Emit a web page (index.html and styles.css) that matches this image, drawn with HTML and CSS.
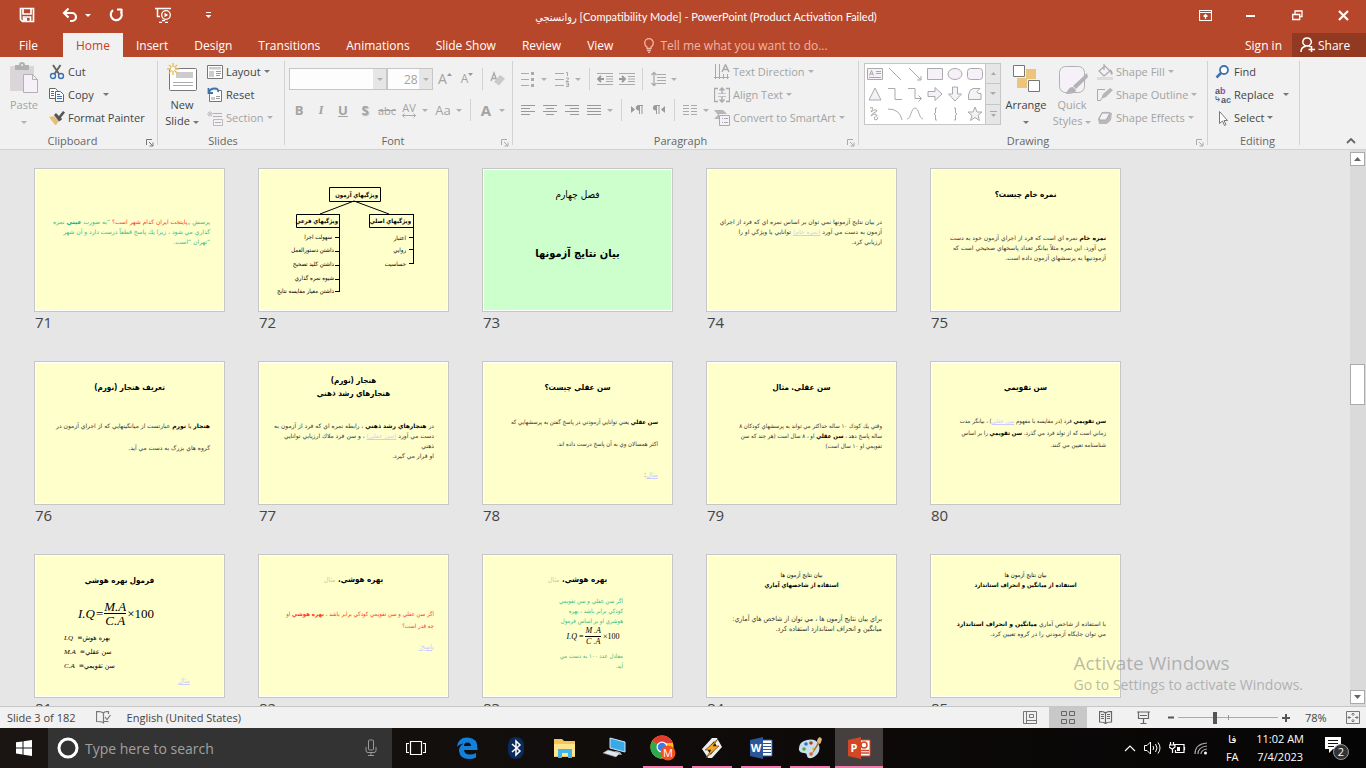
FILE: index.html
```html
<!DOCTYPE html>
<html lang="en">
  <head>
    <meta charset="UTF-8" />
    <meta name="viewport" content="width=device-width, initial-scale=1.0" />
    <title>روانسنجي - PowerPoint</title>
    <link rel="stylesheet" href="styles.css">
  </head>
  <body>
    <header class="titlebar">
      <div class="quick">
        <button aria-label="Save"><svg width="16" height="16"><path d="M1.5 1.5h13v13h-11l-2-2z M4 2v5h8V2 M4.500 14v-4h7v4" fill="none" stroke="#fff" stroke-width="1.700"/><path d="M5 11h3v3H5z" fill="#fff"/></svg></button>
        <button class="undo" aria-label="Undo"><svg width="16" height="16"><path d="M2 6h8a4 4 0 0 1 0 8H8 M6.500 1.500 2 6l4.500 4.500" fill="none" stroke="#fff" stroke-width="2.200"/></svg><span class="caret"></span></button>
        <button class="redo" aria-label="Redo"><svg width="16" height="16"><path d="M9 2.500H14M13.500 2v5 M12.800 4.500A5.500 5.500 0 1 1 5 3.200" fill="none" stroke="#fff" stroke-width="2.200"/></svg></button>
        <button class="present" aria-label="Start from beginning"><svg width="18" height="16"><path d="M1 1.500h16 M3.500 2v7.500H6 M8 13.500h3M5 15.500h3M11 15.500h3" fill="none" stroke="#fff" stroke-width="1.500"/><circle cx="12" cy="8" r="4.300" fill="none" stroke="#fff" stroke-width="1.300"/><path d="M10.500 5.800 14.200 8l-3.700 2.200z" fill="#fff"/></svg></button>
        <button class="more" aria-label="Customize"><svg width="7" height="8"><path d="M1 1.500h5" stroke="#fff"/><path d="M0.500 4h6l-3 3z" fill="#fff"/></svg></button>
      </div>
      <div class="doc-title">روانسنجي [Compatibility Mode] - PowerPoint (Product Activation Failed)</div>
      <div class="window-buttons">
        <button aria-label="Ribbon options"><svg width="13" height="11"><path d="M.5.5h12v10H.5z M1 2.500h11 M6.500 9V5 M4.500 6.500l2-2 2 2" fill="none" stroke="#fff" stroke-width="1.200"/></svg></button>
        <button aria-label="Minimize"><svg width="10" height="10"><path d="M0 6h9" stroke="#fff" stroke-width="2"/></svg></button>
        <button aria-label="Restore"><svg width="11" height="11"><path d="M.7 4.500h7v5h-7z M3 4V1h7v5.500H8" fill="none" stroke="#fff" stroke-width="1.300"/></svg></button>
        <button aria-label="Close"><svg width="11" height="11"><path d="M1 1l9 9M10 1l-9 9" stroke="#fff" stroke-width="2.200"/></svg></button>
      </div>
    </header>

    <nav class="tabs">
      <button class="file">File</button>
      <button class="active">Home</button>
      <button>Insert</button>
      <button>Design</button>
      <button>Transitions</button>
      <button>Animations</button>
      <button>Slide Show</button>
      <button>Review</button>
      <button>View</button>
      <label class="tell">
        <svg width="10" height="15"><path d="M3 10.500V9Q.7 7.500.7 5a4.300 4.300 0 0 1 8.600 0Q9.300 7.500 7 9v1.500z M3 12.500h4M4 14.300h2" fill="none" stroke="#f3b6a4" stroke-width="1.300"/></svg>
        <input type="text" placeholder="Tell me what you want to do..." />
      </label>
      <button class="sign">Sign in</button>
      <button class="share"><svg width="16" height="16"><path d="M1 15q0-5 4.500-5.500 M7 1a4 4 0 0 1 2.200 7.500q-2.200 1-4.300 0A4 4 0 0 1 7 1z M9 9l1.500 1 M11.500 9v6M8.500 12.500h6.500" fill="none" stroke="#fff" stroke-width="1.500"/></svg>Share</button>
    </nav>

    <section class="ribbon">
      <div class="group clipboard">
        <div class="tools">
          <button class="big off">
            <svg width="30" height="32"><path d="M1 4h24v25H1z" fill="#d9d5d9"/><path d="M6 3h4q0-3 3-3t3 3h4v5H6z" fill="#b1b1b1"/><circle cx="13" cy="3" r="1" fill="#f1f1f1"/><path d="M14.500 12.500h9l5 5v13h-14z" fill="#f6f1f8" stroke="#b1b1b1"/><path d="M23.500 12.500v5h5" fill="none" stroke="#b1b1b1"/></svg>
            Paste<span><i class="caret"></i></span>
          </button>
          <div class="list">
            <button class="cmd"><svg width="16" height="16"><path d="M4 1l6 9M11.500 1l-6 9" stroke="#666" stroke-width="2"/><circle cx="4" cy="12" r="2.500" fill="none" stroke="#3f72ab" stroke-width="1.400"/><circle cx="12" cy="12" r="2.500" fill="none" stroke="#3f72ab" stroke-width="1.400"/></svg>Cut</button>
            <button class="cmd split"><svg width="16" height="16"><path d="M.5 1.500h6l2 2v8h-8z" fill="#fff" stroke="#666"/><path d="M6.500 4.500h5l3 3v7h-8z" fill="#fff" stroke="#666"/><path d="M2 4.500h3M2 6.500h3M2 8.500h3M8 7.500h3M8 9.500h5M8 11.500h5" stroke="#3f72ab"/></svg>Copy<i class="caret"></i></button>
            <button class="cmd"><svg width="16" height="16"><path d="M0 7l5-1 5 5-3 4H6z" fill="#eabf75"/><path d="M5 5l2-2 3 3 4-5 2 1.500-4 5 1 2-3 2z" fill="#555"/></svg>Format Painter</button>
          </div>
        </div>
        <footer><span>Clipboard</span><button class="launch" aria-label="Clipboard settings"><svg width="8" height="8"><path d="M.5 6V.5H6 M3 3l4 4M7 3.500V7H3.500" fill="none" stroke="#777"/></svg></button></footer>
      </div>

      <div class="group slides-group">
        <div class="tools">
          <button class="big">
            <svg width="30" height="32"><rect x="2.500" y="6.500" width="27" height="22" rx="1" fill="#fff" stroke="#777"/><path d="M9 10h17v6H9z" fill="#ccc"/><path d="M6 20.500h20M6 23.500h20" stroke="#aaa"/><path d="M6 1v12M0 7h12M2 3l8 8M10 3l-8 8" stroke="#eabf60" stroke-width="1.500"/><circle cx="6" cy="7" r="2" fill="#fff"/></svg>
            New<span>Slide <i class="caret"></i></span>
          </button>
          <div class="list">
            <button class="cmd"><svg width="16" height="14"><path d="M.5.500h15v13H.5z" fill="#fff" stroke="#777"/><path d="M2 2h12v2.500H2zM2 6h5v6H2z" fill="#ccc"/><path d="M9 6.500h5M9 8.500h5M9 10.500h4" stroke="#999"/></svg>Layout<i class="caret"></i></button>
            <button class="cmd"><svg width="16" height="16"><path d="M2.500 5v9.500h12v-11H12" fill="#fff" stroke="#777"/><path d="M4 10h4v3H4z" fill="#ccc"/><path d="M9 9.500h4M9 11.500h4" stroke="#999"/><path d="M1.500 1v5H6 M1.500 6Q3 1.500 7.500 1.500T11 5" fill="none" stroke="#3f72ab" stroke-width="1.800"/></svg>Reset</button>
            <button class="cmd off"><svg width="16" height="16"><path d="M3 1v6M0 4h6M1 2l4 4M5 2L1 6" stroke="#c5bfc5"/><path d="M6 3.500h9M6 6.500h9" stroke="#b1b1b1"/><path d="M6.500 9.500h9v6h-9z" fill="#f6f1f8" stroke="#c0b8c0"/><path d="M8 12.500h6" stroke="#b1b1b1"/></svg>Section<i class="caret"></i></button>
          </div>
        </div>
        <footer><span>Slides</span></footer>
      </div>

      <div class="group font off">
        <div class="tools">
          <div class="rows">
            <div class="row">
              <div class="pick name"><select aria-label="Font" disabled><option></option></select><i class="caret"></i></div>
              <div class="pick size"><select aria-label="Font size" disabled><option>28</option></select><i class="caret"></i></div>
              <button class="tool grow">A<svg width="5" height="3"><path d="M0 3h5L2.500 0z" fill="#999"/></svg></button>
              <button class="tool shrink">A<svg width="5" height="3"><path d="M0 0h5L2.500 3z" fill="#999"/></svg></button>
              <span class="sep"></span>
              <button class="tool" aria-label="Clear formatting"><svg width="16" height="16"><path d="M1 10L4 2l3 8M2 7.500h4" fill="none" stroke="#aaa" stroke-width="1.400"/><path d="M4 11l6-7 5 3.500-6 7z" fill="#ccc8cc"/></svg></button>
            </div>
            <div class="row">
              <button class="tool letter"><b>B</b></button>
              <button class="tool letter"><em>I</em></button>
              <button class="tool letter"><u>U</u></button>
              <button class="tool letter shadow"><b>S</b></button>
              <button class="tool letter small"><s>abc</s></button>
              <button class="tool letter spacing">AV<svg width="16" height="5"><path d="M1 2.500h14M3.500.5l-2 2 2 2M12.500.5l2 2-2 2" fill="none" stroke="#aaa"/></svg></button><span class="drop"><i class="caret"></i></span>
              <button class="tool letter">Aa</button><span class="drop"><i class="caret"></i></span>
              <span class="sep"></span>
              <button class="tool letter color">A</button><span class="drop"><i class="caret"></i></span>
            </div>
          </div>
        </div>
        <footer><span>Font</span><button class="launch" aria-label="Font settings"><svg width="8" height="8"><path d="M.5 6V.5H6 M3 3l4 4M7 3.500V7H3.500" fill="none" stroke="#aaa"/></svg></button></footer>
      </div>

      <div class="group paragraph off">
        <div class="tools">
          <div class="rows">
            <div class="row">
              <button class="tool" aria-label="Bullets"><svg width="14" height="16"><path d="M0 2.500h8M0 8.500h8M0 14.500h8" stroke="#aaa"/><path d="M10 1h3v3h-3zM10 7h3v3h-3zM10 13h3v3h-3z" fill="#aaa"/></svg></button><span class="drop"><i class="caret"></i></span>
              <button class="tool" aria-label="Numbering"><svg width="15" height="16"><path d="M0 2.500h9M0 8.500h9M0 14.500h9" stroke="#aaa"/><path d="M11 1.500h1.500V5M11 7h2.500v1L11 10.500h3M11 12h2.500v3.500H11M11.500 13.800h2" fill="none" stroke="#aaa"/></svg></button><span class="drop"><i class="caret"></i></span>
              <span class="sep"></span>
              <button class="tool" aria-label="Decrease indent"><svg width="16" height="14"><path d="M0 1.500h16M0 12.500h16M9 4.500h7M9 7h7M9 9.500h7" stroke="#aaa"/><path d="M1 7h6M4 4L1 7l3 3" fill="none" stroke="#999" stroke-width="1.800"/></svg></button>
              <button class="tool" aria-label="Increase indent"><svg width="16" height="14"><path d="M0 1.500h16M0 12.500h16M9 4.500h7M9 7h7M9 9.500h7" stroke="#aaa"/><path d="M0 7h6M3 4l3 3-3 3" fill="none" stroke="#999" stroke-width="1.800"/></svg></button>
              <span class="sep"></span>
              <button class="tool" aria-label="Line spacing"><svg width="15" height="16"><path d="M6 3.500h9M6 6.500h9M6 9.500h9M6 12.500h9" stroke="#aaa"/><path d="M3 1v14M.5 4L3 1.500 5.500 4M.5 12L3 14.500 5.500 12" fill="none" stroke="#aaa" stroke-width="1.300"/></svg></button><span class="drop"><i class="caret"></i></span>
            </div>
            <div class="row">
              <button class="tool" aria-label="Align left"><svg width="14" height="11"><path d="M0 .5h14M0 3.500h9M0 6.500h14M0 9.500h9" stroke="#999"/></svg></button>
              <button class="tool" aria-label="Center"><svg width="14" height="11"><path d="M0 .5h14M3 3.500h8M0 6.500h14M3 9.500h8" stroke="#999"/></svg></button>
              <button class="tool" aria-label="Align right"><svg width="14" height="11"><path d="M0 .5h14M5 3.500h9M0 6.500h14M5 9.500h9" stroke="#999"/></svg></button>
              <button class="tool" aria-label="Justify"><svg width="14" height="11"><path d="M0 .5h14M0 3.500h14M0 6.500h14M0 9.500h14" stroke="#999"/></svg></button><span class="drop"><i class="caret"></i></span>
              <span class="sep"></span>
              <button class="tool" aria-label="Left to right"><svg width="12" height="10"><path d="M0 1l4 3.500L0 8z" fill="#999"/><path d="M8.500 1v8M11 1v8" stroke="#999"/><path d="M12 .5H7.500a2 2 0 0 0 0 4.500h1V.5" fill="#999" stroke="#999"/></svg></button>
              <button class="tool" aria-label="Right to left"><svg width="12" height="10"><path d="M12 1L8 4.500 12 8z" fill="#999"/><path d="M3.500 1v8M6 1v8" stroke="#999"/><path d="M7 .5H2.500a2 2 0 0 0 0 4.500h1V.5" fill="#999" stroke="#999"/></svg></button>
              <span class="sep"></span>
              <button class="tool" aria-label="Columns"><svg width="14" height="11"><path d="M0 .5h6M0 3.500h6M0 6.500h6M0 9.500h6M8 .5h6M8 3.500h6M8 6.500h6M8 9.500h6" stroke="#aaa"/></svg></button><span class="drop"><i class="caret"></i></span>
            </div>
          </div>
          <div class="list">
            <button class="cmd"><svg width="16" height="16"><path d="M1.500 0v15M5.500 0v15M9.500 10v5M13.500 10v5M0 13.500h15" stroke="#aaa"/><path d="M8 8l3.300-7h.4L15 8M9 5.500h5" fill="none" stroke="#aaa" stroke-width="1.500"/></svg>Text Direction<i class="caret"></i></button>
            <button class="cmd"><svg width="16" height="16"><path d="M4 1.500H.5v13H4M12 1.500h3.500v13H12" fill="none" stroke="#aaa" stroke-width="1.300"/><path d="M4 6.500h8M4 9.500h8" stroke="#c5bfc5"/><path d="M8 1v5M8 10v5M5.500 3.500L8 1l2.500 2.500M5.500 12.500L8 15l2.500-2.500" fill="none" stroke="#aaa" stroke-width="1.500"/></svg>Align Text<i class="caret"></i></button>
            <button class="cmd"><svg width="16" height="16"><path d="M0 0h9l4 4H5v5H0l4-4z" fill="#b8b4b8"/><path d="M5.500 5.500h10v10h-10z" fill="#f6f1f8" stroke="#aaa"/><path d="M8 8.500h1M10 8.500h4M8 12.500h1M10 12.500h4" stroke="#aaa"/></svg>Convert to SmartArt<i class="caret"></i></button>
          </div>
        </div>
        <footer><span>Paragraph</span><button class="launch" aria-label="Paragraph settings"><svg width="8" height="8"><path d="M.5 6V.5H6 M3 3l4 4M7 3.500V7H3.500" fill="none" stroke="#aaa"/></svg></button></footer>
      </div>

      <div class="group drawing">
        <div class="tools">
          <div class="gallery">
            <div class="shapes">
              <button aria-label="Text box"><svg><path d="M.5 2.500h15v11H.5z"/><path d="M2.500 9.500l2-5 2 5M3 8h3M9 5.500h5M9 7.500h5M2 11.500h12"/></svg></button>
              <button aria-label="Line"><svg><path d="M2 2l12 12"/></svg></button>
              <button aria-label="Arrow"><svg><path d="M2 2l12 12M14 10v4h-4"/></svg></button>
              <button aria-label="Rectangle"><svg><path d="M.5 2.500h15v11H.5z"/></svg></button>
              <button aria-label="Oval"><svg><ellipse cx="8" cy="8" rx="7" ry="5.500"/></svg></button>
              <button aria-label="Rounded rectangle"><svg><rect x=".5" y="2.500" width="15" height="11" rx="3"/></svg></button>
              <button aria-label="Triangle"><svg><path d="M8 2l6 12H2z"/></svg></button>
              <button aria-label="Elbow"><svg><path d="M1 2.500h7v11h7" fill="none"/></svg></button>
              <button aria-label="Elbow arrow"><svg><path d="M1 2.500h7v10h6M11.500 9.500l3 3-3 3" fill="none"/></svg></button>
              <button aria-label="Right arrow"><svg><path d="M1 5.500h7V1.500l7 6.500-7 6.500v-4H1z"/></svg></button>
              <button aria-label="Down arrow"><svg><path d="M5.500 1v7H1.500l6.500 7 6.500-7h-4V1z"/></svg></button>
              <button aria-label="Freeform"><svg><path d="M3 4.500l3-2h7l-3 3q0 2.500 4 2v6H1.500V9z"/></svg></button>
              <button aria-label="Scribble"><svg><path d="M3 2q5-2 1 4 5-4 6-1-6 3-6 5 5-4 6 0-4 0-2 4 3 0 3-3" fill="none"/></svg></button>
              <button aria-label="Arc"><svg><path d="M1 3q12 0 14 11" fill="none"/></svg></button>
              <button aria-label="Curve"><svg><path d="M0 13C4 13 4 2 8 2s4 11 8 11" fill="none"/></svg></button>
              <button aria-label="Left brace"><svg><path d="M10 2H8.500v5L7 8l1.500 1v5H10" fill="none"/></svg></button>
              <button aria-label="Right brace"><svg><path d="M7 2h1.500v5L10 8 8.500 9v5H7" fill="none"/></svg></button>
              <button aria-label="Star"><svg><path d="M8 1l2 5h5l-4 3.500 1.500 5L8 11.500l-4.500 3 1.500-5L1 6h5z"/></svg></button>
            </div>
            <div class="spin">
              <button aria-label="Previous row"><svg width="5" height="3"><path d="M0 3h5L2.500 0z" fill="#aaa"/></svg></button>
              <button aria-label="Next row"><i class="caret"></i></button>
              <button aria-label="More shapes"><svg width="7" height="7"><path d="M0 .5h7" stroke="#aaa"/><path d="M1 3h5L3.500 6z" fill="#aaa"/></svg></button>
            </div>
          </div>
          <button class="big">
            <svg width="30" height="32"><path d="M15 7h10v10H15zM6 16h10v10H6z" fill="#edc57a"/><path d="M2.500 3.500h11v11h-11zM17.500 18.500h11v11h-11z" fill="#fff" stroke="#777"/></svg>
            Arrange<span><i class="caret"></i></span>
          </button>
          <button class="big off">
            <svg width="32" height="32"><rect x="3.500" y="4.500" width="25" height="26" rx="6" fill="#f6f1f8" stroke="#b1b1b1"/><path d="M31 11l1 4-12 12-3-3zM10 32q3-8 7-7l3 3q0 4-10 4z" fill="#b5b2b5"/></svg>
            Quick<span>Styles <i class="caret"></i></span>
          </button>
          <div class="list off">
            <button class="cmd"><svg width="16" height="16"><path d="M2 7l6-5 5 5-6 5zM7 6V0" fill="#f6f1f8" stroke="#aaa" stroke-width="1.200"/><path d="M13 5q4 3 2 6-2-1-2-6z" fill="#aaa"/><path d="M0 13h16v3H0z" fill="#dedade"/></svg>Shape Fill<i class="caret"></i></button>
            <button class="cmd"><svg width="16" height="16"><path d="M8 2.500H.5v11h3l1-2" fill="none" stroke="#aaa"/><path d="M4 12l2-5 7-6 3 2-7 7z" fill="#b8b4b8"/></svg>Shape Outline<i class="caret"></i></button>
            <button class="cmd"><svg width="16" height="16"><path d="M1 9l4-7q5-1 10 1l-1 7-4 4H2z" fill="#bbb8bb"/><path d="M2 9l3-6h8L9 10H3z" fill="#f6f1f8" stroke="#aaa"/></svg>Shape Effects<i class="caret"></i></button>
          </div>
        </div>
        <footer><span>Drawing</span><button class="launch" aria-label="Drawing settings"><svg width="8" height="8"><path d="M.5 6V.5H6 M3 3l4 4M7 3.500V7H3.500" fill="none" stroke="#aaa"/></svg></button></footer>
      </div>

      <div class="group editing">
        <div class="tools">
          <div class="list">
            <button class="cmd"><svg width="16" height="16"><circle cx="9" cy="6" r="4" fill="#fff" stroke="#3f72ab" stroke-width="1.800"/><path d="M6 9l-4.500 4.500" stroke="#3f72ab" stroke-width="2.500"/></svg>Find</button>
            <button class="cmd split"><svg width="16" height="22" class="abac"><text x="0" y="10">a<tspan fill="#8b4fb0">b</tspan></text><text x="6" y="19">a<tspan fill="#3f72ab">c</tspan></text><path d="M1 12v3.500h3M3 13.500l1.500 2-1.500 2" fill="none" stroke="#3f72ab"/></svg>Replace<i class="caret"></i></button>
            <button class="cmd"><svg width="16" height="16"><path d="M4.500 1.500v12l3-2.500 2 4.500 1.500-.8-2-4.200h3.500z" fill="#fff" stroke="#777"/></svg>Select<i class="caret"></i></button>
          </div>
        </div>
        <footer><span>Editing</span></footer>
      </div>
      <button class="collapse" aria-label="Collapse ribbon"><svg width="10" height="6"><path d="M1 5l4-4 4 4" fill="none" stroke="#666" stroke-width="1.800"/></svg></button>
    </section>

    <main class="sorter">
      <div class="slides" lang="fa">
        <figure>
          <div class="slide">
            <p class="body wide alone teal">پرسش „<span class="red">پايتخت ايران كدام شهر است؟</span> “به صورت <b>عيني</b> نمره<br>گذاري مي شود ، زيرا يك پاسخ قطعاً درست دارد و آن شهر<br>“تهران “است.</p>
          </div>
          <figcaption>71</figcaption>
        </figure>
        <figure>
          <div class="slide">
            <svg class="chart" width="187" height="140">
              <path d="M94 31L60 44M94 31l35 13" stroke="#000"/>
              <path d="M69.500 17.500h51v14h-51zM36.500 44.500h43v13h-43zM109.500 44.500h44v13h-44z M79.500 44v77.500M75 67.500h5M75 81.500h5M75 95.500h5M75 109.500h5M75 121.500h5 M153.500 44v49.500M149 67.500h5M149 79.500h5M149 93.500h5" fill="none" stroke="#000"/>
              <g class="strong">
                <text x="118" y="27">ويژگيهاي آزمون</text>
                <text x="78" y="53">ويژگيهاي فرعي</text>
                <text x="151" y="53">ويژگيهاي اصلي</text>
              </g>
              <text x="72" y="69">سهولت اجرا</text>
              <text x="74" y="82">داشتن دستورالعمل</text>
              <text x="74" y="96">داشتن كليد تصحيح</text>
              <text x="74" y="110">شيوه نمره گذاري</text>
              <text x="74" y="123">داشتن معيار مقايسه نتايج</text>
              <text x="146" y="70">اعتبار</text>
              <text x="146" y="82">روايي</text>
              <text x="146" y="96">حساسيت</text>
            </svg>
          </div>
          <figcaption>72</figcaption>
        </figure>
        <figure>
          <div class="slide green">
            <h2 class="chapter">فصل چهارم</h2>
            <h2 class="chapter main">بيان نتايج آزمونها</h2>
          </div>
          <figcaption>73</figcaption>
        </figure>
        <figure>
          <div class="slide">
            <p class="body wide alone">در بيان نتايج آزمونها نمي توان بر اساس نمره اي كه فرد از اجراي<br>آزمون به دست مي آورد <a href="#">(نمره خام)</a> توانايي يا ويژگي او را<br>ارزيابي كرد.</p>
          </div>
          <figcaption>74</figcaption>
        </figure>
        <figure>
          <div class="slide">
            <h2>نمره خام چيست؟</h2>
            <p class="body wide low"><b>نمره خام</b> نمره اي است كه فرد از اجراي آزمون خود به دست<br>مي آورد. اين نمره مثلاً بيانگر تعداد پاسخهاي صحيحي است كه<br>آزمودنيها به پرسشهاي آزمون داده است.</p>
          </div>
          <figcaption>75</figcaption>
        </figure>

        <figure>
          <div class="slide">
            <h2>تعريف هنجار (نورم)</h2>
            <p class="body wide near loose"><b>هنجار</b> يا <b>نورم</b> عبارتست از ميانگينهايي كه از اجراي آزمون در<br>گروه هاي بزرگ به دست مي آيد.</p>
          </div>
          <figcaption>76</figcaption>
        </figure>
        <figure>
          <div class="slide">
            <h2><span>هنجار (نورم)<br>هنجارهاي رشد ذهني</span></h2>
            <p class="body wide mid">در <b>هنجارهاي رشد ذهني</b> ، رابطه نمره اي كه فرد از آزمون به<br>دست مي آورد <a href="#">(سن عقلي)</a> ، و سن فرد ملاك ارزيابي توانايي<br>ذهني<br>او قرار مي گيرد.</p>
          </div>
          <figcaption>77</figcaption>
        </figure>
        <figure>
          <div class="slide">
            <h2>سن عقلي چيست؟</h2>
            <p class="body loose"><b>سن عقلي</b> يعني توانايي آزمودني در پاسخ گفتن به پرسشهايي كه<br>اكثر همسالان وي به آن پاسخ درست داده اند.</p>
            <p class="body low link"><a href="#">مثال</a>:</p>
          </div>
          <figcaption>78</figcaption>
        </figure>
        <figure>
          <div class="slide">
            <h2>سن عقلي. مثال</h2>
            <p class="body mid">وقتي يك كودك ۱۰ ساله حداكثر مي تواند به پرسشهاي كودكان ۸<br>ساله پاسخ دهد ، <b>سن عقلي</b> او ، ۸ سال است (هر چند كه سن<br>تقويمي او ۱۰ سال است)</p>
          </div>
          <figcaption>79</figcaption>
        </figure>
        <figure>
          <div class="slide">
            <h2>سن تقويمي</h2>
            <p class="body near airy"><b>سن تقويمي</b> فرد (در مقايسه با مفهوم <a href="#">سن عقلي</a>) ، بيانگر مدت<br>زماني است كه از تولد فرد مي گذرد. <b>سن تقويمي</b> را بر اساس<br>شناسنامه تعيين مي كنند.</p>
          </div>
          <figcaption>80</figcaption>
        </figure>

        <figure>
          <div class="slide formulas">
            <h2>فرمول بهره هوشي</h2>
            <div class="formula large"><em>I.Q</em>=<span class="frac"><em>M.A</em><em>C.A</em></span>×100</div>
            <ul class="terms">
              <li><em>I.Q</em><span>=بهره هوش</span></li>
              <li><em>M.A</em><span>=سن عقلي</span></li>
              <li><em>C.A</em><span>=سن تقويمي</span></li>
            </ul>
            <a href="#">مثال</a>
          </div>
          <figcaption>81</figcaption>
        </figure>
        <figure>
          <div class="slide">
            <h2><span>بهره هوشي. <span class="dim">مثال</span></span></h2>
            <p class="body near airy red">اگر سن عقلي و سن تقويمي كودكي برابر باشد ، <b>بهره هوشي</b> او<br>چه قدر است؟</p>
            <p class="body mid link"><a href="#">پاسخ:</a></p>
          </div>
          <figcaption>82</figcaption>
        </figure>
        <figure>
          <div class="slide">
            <h2><span>بهره هوشي. <span class="dim">مثال</span></span></h2>
            <div class="narrow teal">
              <p class="body">اگر سن عقلي و سن تقويمي<br>كودكي برابر باشد ، بهره<br>هوشري او بر اساس فرمول</p>
              <div class="formula"><em>I.Q</em> = <span class="frac"><em>M .A</em><em>C .A</em></span>×100</div>
              <p class="body">معادل عدد ۱۰۰ به دست مي<br>آيد.</p>
            </div>
          </div>
          <figcaption>83</figcaption>
        </figure>
        <figure>
          <div class="slide">
            <h2 class="minor"><span><small>بيان نتايج آزمون ها</small><br>استفاده از شاخصهاي آماري</span></h2>
            <p class="body large-body mid">براي بيان نتايج آزمون ها ، مي توان از شاخص هاي آماري:<br>ميانگين و انحراف استاندارد استفاده كرد.</p>
          </div>
          <figcaption>84</figcaption>
        </figure>
        <figure>
          <div class="slide">
            <h2 class="minor"><span><small>بيان نتايج آزمون ها</small><br>استفاده از ميانگين و انحراف استاندارد</span></h2>
            <p class="body wide low">با استفاده از شاخص آماري <b>ميانگين و انحراف استاندارد</b><br>مي توان جايگاه آزمودني را در گروه تعيين كرد.</p>
          </div>
          <figcaption>85</figcaption>
        </figure>
      </div>
      <div class="scrollbar">
        <button aria-label="Scroll up"><svg width="7" height="4"><path d="M0 4h7L3.500 0z" fill="#666"/></svg></button>
        <div class="track"><div class="thumb"></div></div>
        <button aria-label="Scroll down"><svg width="7" height="4"><path d="M0 0h7L3.500 4z" fill="#666"/></svg></button>
      </div>
      <div class="watermark">
        <strong>Activate Windows</strong>
        Go to Settings to activate Windows.
      </div>
    </main>

    <footer class="status">
      <span>Slide 3 of 182</span>
      <button class="proof" aria-label="Proofing"><svg width="15" height="13"><path d="M7.500 11.500q-2-1-7-1V.5q5 0 7 1.500v10.500M7.500 2q1-1.500 5-1.500V3M12.500 10.500h-5M9 6l2 2.500L14.500 4" fill="none" stroke="#777" stroke-width="1.200"/></svg></button>
      <span>English (United States)</span>
      <div class="views">
        <button aria-label="Normal"><svg width="14" height="13"><path d="M.5.500h13v12H.5zM3.500 1v11.500M3.500 9.500h10" fill="none" stroke="#777"/><path d="M6.500 3.500h4v3h-4z" fill="none" stroke="#777"/></svg></button>
        <button class="on" aria-label="Slide sorter"><svg width="14" height="13"><path d="M.5.500h5v4h-5zM8.500.500h5v4h-5zM.5 8.500h5v4h-5zM8.500 8.500h5v4h-5z" fill="none" stroke="#666"/></svg></button>
        <button aria-label="Reading view"><svg width="14" height="13"><path d="M6.500 12.500Q5 11 .5 11V.500Q5 .500 6.500 2 8 .500 12.500.500V11Q8 11 6.500 12.500zM6.500 2v10M2 3.500h3M2 5.500h3M2 7.500h3M8 3.500h3M8 5.500h3M8 7.500h3" fill="none" stroke="#666" stroke-width="1.200"/></svg></button>
        <button aria-label="Slide show"><svg width="14" height="13"><path d="M0 1h13M1.500 1v6.500h10V1M3 4.500h7M6.500 8v4M3.500 12.500h6" fill="none" stroke="#666" stroke-width="1.200"/></svg></button>
      </div>
      <div class="zoom">
        <button aria-label="Zoom out"><svg width="6" height="3"><path d="M0 1.500h6" stroke="#555" stroke-width="2"/></svg></button>
        <input type="range" min="0" max="100" value="36" aria-label="Zoom" />
        <button aria-label="Zoom in"><svg width="8" height="8"><path d="M0 4h8M4 0v8" stroke="#555" stroke-width="2"/></svg></button>
        <span>78%</span>
        <button class="fit" aria-label="Fit to window"><svg width="14" height="13"><path d="M.5.500h13v12H.5z" fill="none" stroke="#777"/><path d="M7 2v3M7 8v3M2 6.500h3M9 6.500h3M5.500 3.500L7 2l1.500 1.500M5.500 9.500L7 11l1.500-1.500M3.500 5L2 6.500 3.500 8M10.500 5L12 6.500 10.500 8" fill="none" stroke="#777"/></svg></button>
      </div>
    </footer>

    <div class="taskbar">
      <button class="start" aria-label="Start"><svg width="16" height="16"><path d="M0 2.300l6.500-.9v6H0zM7.500 1.200L16 0v7.400H7.500zM0 8.500h6.500v6L0 13.600zM7.500 8.500H16V16l-8.500-1.200z" fill="#fff"/></svg></button>
      <label class="search">
        <svg width="22" height="22"><circle cx="11" cy="11" r="9" fill="none" stroke="#fff" stroke-width="3"/></svg>
        <input type="text" placeholder="Type here to search" />
        <svg width="12" height="18"><rect x="3.500" y="1" width="5" height="10" rx="1" fill="none" stroke="#999"/><path d="M1 8v3.500q0 2 2 2h6q2 0 2-2V8M6 13.500V17M3 16.500h6" fill="none" stroke="#999"/></svg>
      </label>
      <button class="app view" aria-label="Task view"><svg width="20" height="14"><path d="M4.500.500h11v13h-11zM3 2.500H.5v9H3M17 2.500h2.500v9H17" fill="none" stroke="#fff" stroke-width="1.200"/></svg></button>
      <button class="app" aria-label="Edge"><svg width="22" height="22"><path d="M1 10Q2 0 12 .500q9.500.5 9.500 11V13H8q.5 4.500 6 4.500 3.500 0 6-1.500v4.500q-3 1.500-7 1.500Q4 22 3 14q0-5 4.500-7.500Q3 7 1 10zM8 9h7q0-3.500-3.500-3.500T8 9z" fill="#1380dc"/></svg></button>
      <button class="app" aria-label="Bluetooth"><svg width="18" height="22"><rect x="1" width="16" height="22" rx="8" fill="#0b2a5c"/><path d="M5 7l8 7-4 4V4l4 4-8 7" fill="none" stroke="#fff" stroke-width="1.500"/></svg></button>
      <button class="app" aria-label="File Explorer"><svg width="22" height="20"><path d="M0 1h8l2 2h11v16H0z" fill="#f0c75a"/><path d="M0 6h21v12H0z" fill="#ffe48f"/><path d="M4 11h14v9h-4v-5H8v5H4z" fill="#3fb5e8"/></svg></button>
      <button class="app" aria-label="This PC"><svg width="24" height="22"><path d="M8 1l15 4v10L8 11z" fill="#3aa9ea" stroke="#cfe6f5"/><path d="M13 14l5 1 2 3-6-1z" fill="#ccc"/><path d="M1 16l5-3 12 3-4 4z" fill="#dfe5ea" stroke="#8a949c" stroke-width=".5"/></svg></button>
      <button class="app open" aria-label="Chrome"><svg width="26" height="26"><circle cx="12" cy="12" r="11.500" fill="#fbc116"/><path d="M12 12L2 6.200A11.500 11.500 0 0 1 22 6.200L23 8H12z" fill="#e33b2e"/><path d="M12 12L2 6.200A11.500 11.500 0 0 0 11 23.500L15 15z" fill="#2da94f"/><circle cx="12" cy="12" r="5.500" fill="#fff"/><circle cx="12" cy="12" r="4.300" fill="#3b7ded"/><circle cx="18" cy="18" r="7.500" fill="#f4511e"/><text x="18" y="22" class="badge">M</text></svg></button>
      <button class="app open" aria-label="Winamp"><svg width="22" height="22"><path d="M1 12L11 1h5L6 12l5 8-4 1zM21 10L11 21H7L16 10 12 2l4-1z" fill="#eee"/><path d="M17 2L4 13h6l-5 8L18 9h-6z" fill="#f5a623" stroke="#6b3a00" stroke-width=".6"/></svg></button>
      <button class="app open" aria-label="Word"><svg width="24" height="22"><path d="M11 3h12v16H11z" fill="#fff" stroke="#2b579a"/><path d="M14 6.500h8M14 9.500h8M14 12.500h8M14 15.500h8" stroke="#2b579a"/><path d="M1 3l13-3v22L1 19z" fill="#2b579a"/><text x="7" y="15" class="letter-w">W</text></svg></button>
      <button class="app open" aria-label="Paint"><svg width="24" height="22"><path d="M1 13Q0 5 9 3q9-2 12 5 2 8-5 12-6 3-7-1 0-3-3-3-4 0-5-3z" fill="#c6dfee"/><circle cx="6" cy="12" r="1.800" fill="#58a53c"/><circle cx="8" cy="7" r="1.800" fill="#3d6fc4"/><circle cx="13" cy="6" r="1.800" fill="#c0392b"/><circle cx="16" cy="12" r="1.800" fill="#e5b73b"/><circle cx="13" cy="17" r="1.800" fill="#e0662b"/><path d="M12 20L20 5l2 1z" fill="#b5712f"/><path d="M19 5q0-4 3-5l2 2q-1 4-2 5z" fill="#e2b57d"/></svg></button>
      <button class="app open current" aria-label="PowerPoint"><svg width="24" height="22"><path d="M11 3h12v16H11z" fill="#fff" stroke="#d24726"/><circle cx="17" cy="8" r="3" fill="none" stroke="#d24726" stroke-width="1.500"/><path d="M14 13.500h8M14 16h8" stroke="#d24726" stroke-width="1.400"/><path d="M1 3l13-3v22L1 19z" fill="#d24726"/><text x="7" y="15" class="letter-w">P</text></svg></button>
      <div class="tray">
        <button aria-label="Hidden icons"><svg width="12" height="7"><path d="M1 6l5-5 5 5" fill="none" stroke="#fff" stroke-width="1.200"/></svg></button>
        <button aria-label="Volume"><svg width="17" height="14"><path d="M.5 4.500H3l3.500-3.500v12L3 9.500H.5zM9 5q1.500 2 0 4M11.500 3q3 4 0 8M14 1.500q4 5.500 0 11" fill="none" stroke="#fff"/></svg></button>
        <button aria-label="Battery"><svg width="17" height="12"><path d="M5 2.500h10v8H6.500V8M15.500 5v3" fill="none" stroke="#fff" stroke-width="1.200"/><path d="M8 5h3v4H8z" fill="#fff"/><path d="M1.500 0v3M4.500 0v3M0 3h6v2L3.500 7v4M0 3v2l3 2" fill="none" stroke="#fff" stroke-width="1.200"/></svg></button>
        <button aria-label="Network"><svg width="14" height="13"><path d="M1 12Q1 2 13 1M4 12q0-7 9-8M7 12q0-4 6-5" fill="none" stroke="#aaa" stroke-width="1.200"/><circle cx="11.500" cy="11" r="1.500" fill="#fff"/></svg></button>
        <button class="lang"><span>فا</span><span>FA</span></button>
        <button class="clock"><span>11:02 AM</span><span>7/4/2023</span></button>
        <button class="notes" aria-label="Notifications"><svg width="26" height="26"><path d="M1 2h16v12H9l-4 4v-4H1z" fill="#fff"/><path d="M4 5.500h10M4 8.500h10M4 11.500h6" stroke="#111"/><circle cx="17" cy="17" r="7.500" fill="#333" stroke="#999"/><text x="17" y="21" class="badge">2</text></svg></button>
      </div>
    </div>
  </body>
</html>
```
FILE: styles.css
```css
* {
  box-sizing: border-box;
}
body {
  margin: 0;
  height: 100vh;
  display: flex;
  flex-direction: column;
  overflow: hidden;
  font-family: "Open Sans", "DejaVu Sans", sans-serif;
  font-size: 11px;
  color: #444;
  background-color: #e6e6e6;
}
button,
input,
select {
  margin: 0;
  padding: 0;
  border: 0;
  background: none;
  font: inherit;
  color: inherit;
}
svg {
  display: block;
  flex: none;
}
.caret {
  flex: none;
  display: inline-block;
  border: 3px solid transparent;
  border-top: 3px solid #777;
  border-bottom: 0;
}
.off,
.off .caret {
  color: #a3a3a3;
}
.off .caret {
  border-top-color: #b1b1b1;
}

/* title bar */
.titlebar {
  display: flex;
  height: 33px;
  background-color: #b7472a;
  color: #fff;
}
.quick {
  width: 230px;
  height: 30px;
  padding-left: 19px;
  display: flex;
  align-items: center;
}
.quick button {
  display: flex;
  align-items: center;
}
.quick .caret {
  margin-left: 7px;
  border-top-color: #fff;
}
.undo {
  margin-left: 27px;
}
.redo {
  margin-left: 17px;
}
.present {
  margin-left: 30px;
}
.more {
  margin-left: 33px;
}
.doc-title {
  flex: 1;
  text-align: center;
  font-family: Lato, "DejaVu Sans Condensed", sans-serif;
  line-height: 34px;
}
.window-buttons {
  display: flex;
  height: 30px;
}
.window-buttons button {
  width: 46px;
  display: flex;
  align-items: center;
  justify-content: center;
}

/* ribbon tabs */
.tabs {
  display: flex;
  height: 24px;
  background-color: #b7472a;
  color: #fff;
  font-size: 12px;
}
.tabs button {
  padding: 0 13px;
}
.tabs .file {
  width: 57px;
  margin-right: 6px;
}
.tabs .active {
  background-color: #f1f1f1;
  color: #c9411f;
}
.tell {
  flex: 1;
  display: flex;
  align-items: center;
  gap: 6px;
  margin-left: 18px;
}
.tell input {
  flex: 1;
}
.tell input::placeholder {
  color: #f0b5a4;
}
.tabs .sign {
  padding: 0 10px;
}
.tabs .share {
  width: 74px;
  padding: 0 8px;
  display: flex;
  align-items: center;
  gap: 2px;
  background-color: #923922;
}

/* ribbon */
.ribbon {
  display: flex;
  height: 93px;
  background-color: #f1f1f1;
  border-bottom: 1px solid #d2d2d2;
}
.group {
  padding-top: 3px;
  background: linear-gradient(#d2d2d2, #d2d2d2) right 4px / 1px 84px no-repeat;
}
.clipboard {
  width: 158px;
  padding-left: 3px;
}
.slides-group {
  width: 127px;
  padding-left: 3px;
}
.font {
  width: 228px;
  padding-left: 4px;
}
.paragraph {
  width: 346px;
  padding-left: 5px;
}
.drawing {
  width: 349px;
  padding-left: 5px;
}
.editing {
  width: 92px;
  padding-left: 7px;
}
.tools {
  display: flex;
  gap: 4px;
  height: 72px;
}
.group footer {
  display: flex;
  height: 17px;
  line-height: 17px;
  color: #666;
}
.group footer span {
  flex: 1;
  text-align: center;
}
.launch {
  width: 16px;
  padding: 4px 0 0 4px;
}
.big {
  width: 42px;
  display: flex;
  flex-direction: column;
  align-items: center;
  line-height: 16px;
  white-space: nowrap;
}
.big svg {
  margin: 2px 0 3px;
}
.big .caret {
  vertical-align: middle;
}
.cmd {
  display: flex;
  align-items: center;
  gap: 3px;
  height: 23px;
  white-space: nowrap;
}
.split .caret {
  margin-left: 6px;
}
.rows {
  display: flex;
  flex-direction: column;
  gap: 9px;
  padding-top: 8px;
}
.row {
  display: flex;
  height: 22px;
}
.tool {
  width: 20px;
  margin-right: 2px;
  display: flex;
  align-items: center;
  justify-content: center;
}
.drop {
  width: 12px;
  margin-left: -2px;
  margin-right: 2px;
  display: flex;
  align-items: center;
  justify-content: center;
}
.sep {
  width: 1px;
  margin: 0 5px 0 3px;
  background-color: #d2d2d2;
}
.pick {
  position: relative;
}
.pick select {
  width: 100%;
  height: 22px;
  appearance: none;
  border: 1px solid #c6c6c6;
  background: linear-gradient(#e6e6e6, #e6e6e6) right / 13px 100% no-repeat #fdfdfd;
  opacity: 1;
  font-size: 12px;
}
.pick .caret {
  position: absolute;
  right: 4px;
  top: 10px;
}
.name {
  width: 98px;
}
.size {
  width: 46px;
  margin-right: 2px;
}
.size select {
  padding-left: 16px;
}
.grow,
.shrink {
  align-items: flex-start;
  font-size: 14px;
  line-height: 22px;
}
.shrink {
  font-size: 12px;
}
.grow svg,
.shrink svg {
  margin-top: 5px;
}
.letter {
  font-size: 13px;
}
.letter em {
  font-family: "Liberation Serif", serif;
  font-weight: bold;
}
.letter u {
  font-weight: bold;
}
.shadow {
  text-shadow: 1px 1px 1px #bbb;
}
.small {
  font-size: 11px;
}
.spacing {
  flex-direction: column;
  font-size: 11px;
  line-height: 11px;
}
.color {
  font-size: 15px;
  font-weight: bold;
}
.paragraph .list {
  margin-left: -4px;
}
.gallery {
  display: flex;
  width: 137px;
  height: 62px;
  margin-top: 3px;
  border: 1px solid #c6c6c6;
  background-color: #fff;
}
.shapes {
  flex: 1;
  display: grid;
  grid-template-columns: repeat(6, 20px);
}
.shapes button {
  display: flex;
  align-items: center;
  justify-content: center;
}
.shapes svg {
  width: 16px;
  height: 16px;
  fill: #f6f1f8;
  stroke: #aaa;
}
.spin {
  width: 15px;
  display: flex;
  flex-direction: column;
  gap: 1px;
  background-color: #c6c6c6;
  padding-left: 1px;
}
.spin button {
  flex: 1;
  display: flex;
  align-items: center;
  justify-content: center;
  background-color: #e6e6e6;
}
.spin .caret {
  border-top-color: #aaa;
}
.abac {
  font-family: "Liberation Sans", sans-serif;
  font-size: 9px;
  font-weight: bold;
  fill: #555;
}
.collapse {
  margin: auto 10px 5px auto;
}

/* slide sorter */
.sorter {
  flex: 1;
  min-height: 0;
  display: flex;
  position: relative;
}
.slides {
  flex: 1;
  overflow: hidden;
  padding: 18px 34px 0;
  display: grid;
  grid-template-columns: repeat(auto-fill, 191px);
  gap: 28px 33px;
}
figure {
  margin: 0;
}
figcaption {
  padding-left: 1px;
  font-size: 15px;
  line-height: 21px;
}
.slide {
  height: 144px;
  padding: 1px;
  border: 1px solid #c6c6c6;
  background: #ffffcc content-box;
  box-shadow: inset 0 0 0 1px #fff;
  direction: rtl;
  font-family: "DejaVu Sans Condensed", "DejaVu Sans", sans-serif;
  color: #000;
  white-space: nowrap;
  overflow: hidden;
}
.slide.green {
  background-color: #ccffcc;
}
.slide h2 {
  height: 48px;
  margin: 0;
  display: flex;
  align-items: center;
  justify-content: center;
  text-align: center;
  font-size: 8px;
  line-height: 13px;
}
.slide .minor {
  font-size: 6px;
  line-height: 10px;
}
.minor small {
  font-size: 6px;
  font-weight: normal;
}
.slide a {
  color: #ccccff;
}
.body {
  margin: 0;
  padding-right: 13px;
  font-size: 6px;
  line-height: 10px;
  color: #333;
}
.wide {
  font-family: "DejaVu Sans", sans-serif;
}
.large-body {
  font-size: 7px;
}
.body b {
  color: #000;
}
.alone {
  margin-top: 47px;
}
.near {
  margin-top: 4px;
}
.mid {
  margin-top: 10px;
}
.low {
  margin-top: 15px;
}
.loose {
  line-height: 22px;
}
.airy {
  line-height: 12px;
}
.link {
  font-size: 7px;
}
.teal,
.teal .body {
  color: #33bb88;
}
.teal b {
  color: #00aa88;
}
.red,
.red b {
  color: #ff3333;
}
.dim {
  color: #ccccaa;
  font-size: 7px;
  font-weight: normal;
}
.slide .chapter {
  font-size: 10px;
  font-weight: normal;
}
.slide .main {
  margin-top: 11px;
  font-size: 11px;
  font-weight: bold;
}
.chart {
  direction: ltr;
  font-size: 6px;
  text-anchor: end;
}
.chart .strong {
  font-weight: bold;
}
.formula {
  direction: ltr;
  display: flex;
  align-items: center;
  justify-content: center;
  gap: 2px;
  font-family: "Liberation Serif", serif;
  font-size: 8px;
  line-height: 10px;
  color: #000;
}
.frac {
  display: flex;
  flex-direction: column;
  text-align: center;
}
.frac em:first-child {
  border-bottom: 1px solid #000;
}
.large {
  gap: 1px;
  width: 160px;
  margin-top: -4px;
  margin-right: auto;
  font-size: 13px;
  line-height: 13px;
}
.formulas h2 {
  margin-right: 20px;
}
.terms {
  margin: 4px 0 0;
  padding: 0 0 0 28px;
  list-style: none;
  direction: ltr;
  font-size: 7px;
  line-height: 14px;
}
.terms li {
  display: flex;
  gap: 4px;
}
.terms em {
  font-family: "Liberation Serif", serif;
}
.formulas a {
  margin-right: 33px;
  font-size: 7px;
}
.narrow {
  margin-top: -8px;
  padding-right: 35px;
}
.narrow .formula {
  width: 86px;
  margin-bottom: 4px;
}

.scrollbar {
  width: 16px;
  padding: 2px 1px 2px 0;
  display: flex;
  flex-direction: column;
  background-color: #dadada;
}
.scrollbar button {
  height: 14px;
  display: flex;
  align-items: center;
  justify-content: center;
  border: 1px solid #ababab;
  background-color: #fff;
}
.track {
  flex: 1;
}
.thumb {
  height: 41px;
  margin-top: 198px;
  border: 1px solid #ababab;
  background-color: #fff;
}
.watermark {
  position: absolute;
  right: 63px;
  bottom: 10px;
  font-size: 14px;
  line-height: 22px;
  color: rgba(120, 120, 120, 0.5);
}
.watermark strong {
  display: block;
  font-size: 19px;
  font-weight: normal;
}

/* status bar */
.status {
  display: flex;
  align-items: center;
  height: 22px;
  padding-left: 7px;
  background-color: #f1f1f1;
  border-top: 1px solid #c6c6c6;
}
.proof {
  margin: 0 16px 0 20px;
}
.views {
  display: flex;
  margin-left: auto;
}
.views button {
  width: 38px;
  height: 21px;
  display: flex;
  align-items: center;
  justify-content: center;
}
.views .on {
  background-color: #c8c8c8;
}
.zoom {
  display: flex;
  align-items: center;
  width: 203px;
  padding: 0 6px 0 5px;
}
.zoom input {
  width: 100px;
  height: 14px;
  margin: 0 4px;
  appearance: none;
  background:
    linear-gradient(#999, #999) center / 1px 5px no-repeat,
    linear-gradient(#aaa, #aaa) center / 100% 1px no-repeat;
}
.zoom input::-webkit-slider-thumb {
  appearance: none;
  width: 4px;
  height: 12px;
  background-color: #555;
}
.zoom span {
  margin-left: 15px;
}
.fit {
  margin-left: auto;
}

/* taskbar */
.taskbar {
  display: flex;
  height: 40px;
  background: linear-gradient(90deg, #1a1512, #0d0a09 60%, #060505);
  color: #fff;
}
.start {
  width: 48px;
  display: flex;
  align-items: center;
  justify-content: center;
}
.search {
  width: 344px;
  display: flex;
  align-items: center;
  gap: 6px;
  padding: 0 15px 0 9px;
  background-color: #333;
}
.search input {
  flex: 1;
  font-size: 14px;
}
.search input::placeholder {
  color: #a0a0a0;
}
.app {
  width: 48px;
  margin-right: 1px;
  position: relative;
  display: flex;
  align-items: center;
  justify-content: center;
}
.view {
  margin-right: 3px;
}
.open::after {
  content: "";
  position: absolute;
  left: 4px;
  right: 4px;
  bottom: 0;
  height: 2px;
  background-color: #f07cb0;
}
.current {
  background-color: #45403f;
}
.current::after {
  left: 0;
  right: 0;
}
.badge {
  fill: #fff;
  font-size: 11px;
  text-anchor: middle;
}
.letter-w {
  fill: #fff;
  font-size: 11px;
  font-weight: bold;
  text-anchor: middle;
}
.tray {
  margin-left: auto;
  display: flex;
  align-items: center;
  gap: 8px;
  padding-right: 16px;
}
.lang,
.clock {
  display: flex;
  flex-direction: column;
  align-items: center;
  line-height: 18px;
}
.lang {
  width: 32px;
}
.notes {
  margin-left: 12px;
}
```
